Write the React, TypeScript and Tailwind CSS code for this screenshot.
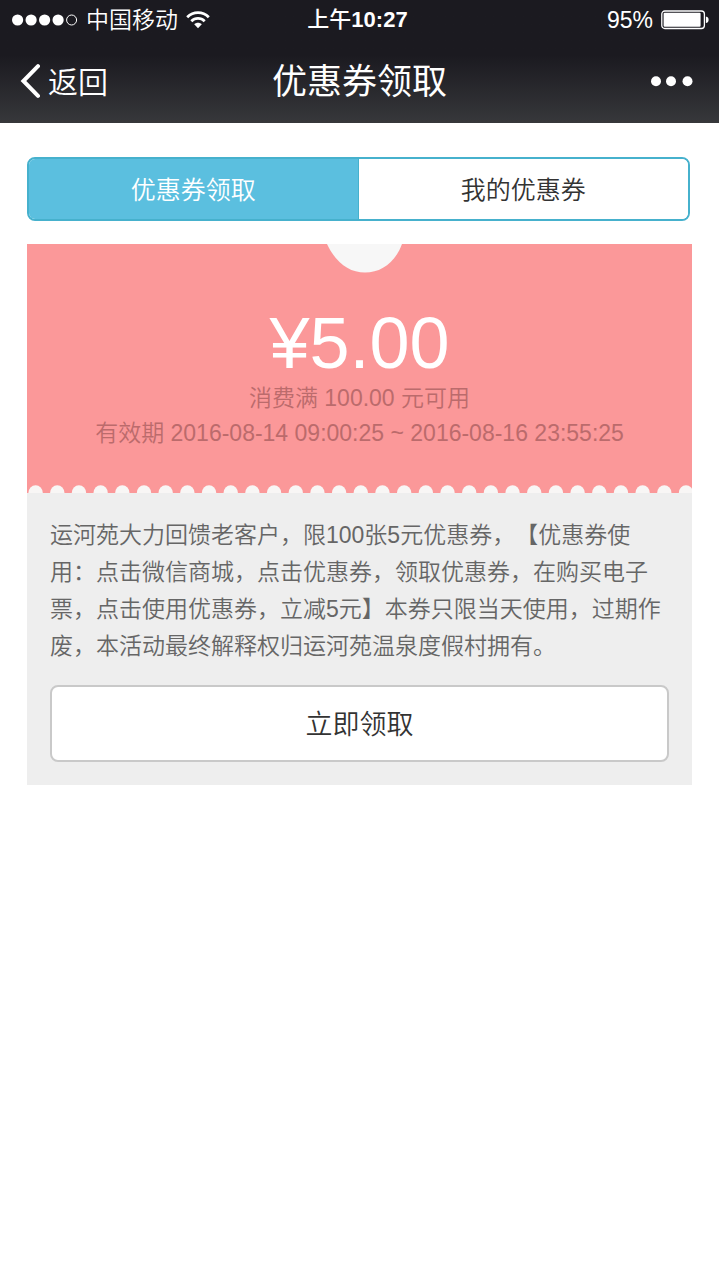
const SIGNAL = [true, true, true, true, false];

function StatusBar() {
  return (
    <div className="grid h-10 grid-cols-[1fr_auto_1fr] items-center px-[10px] text-[23px] leading-10">
      <div className="flex items-center gap-2 pl-[2px]">
        <svg className="h-3 w-[66px]" viewBox="0 0 66 12" role="img" aria-label="信号">
          {SIGNAL.map((on, i) => (
            <circle
              key={i}
              cx={5.6 + i * 13.5}
              cy="6"
              r={on ? 5.6 : 5}
              fill={on ? 'white' : 'none'}
              stroke={on ? 'none' : 'white'}
            />
          ))}
        </svg>
        <span className="font-[350]">中国移动</span>
        <svg className="h-[18px] w-6" viewBox="0 0 24 18" fill="none" stroke="white" strokeWidth="2.8" aria-hidden="true">
          <path d="M1.2 6.2C7.4.1 16.6.1 22.8 6.2" />
          <path d="M5.3 10.3C9.2 6.5 14.8 6.5 18.7 10.3" />
          <path d="M12 17.2L8.2 13.3C10.4 11.3 13.6 11.3 15.8 13.3Z" fill="white" stroke="none" />
        </svg>
      </div>
      <span className="pr-1 text-[22px] font-medium">
        上午<b className="font-bold">10:27</b>
      </span>
      <div className="flex items-center justify-end gap-2">
        <span>95%</span>
        <svg className="h-5 w-12" viewBox="0 0 48 20" aria-hidden="true">
          <rect x="0.8" y="1" width="42.6" height="17.5" rx="3" fill="none" stroke="white" strokeWidth="1.3" />
          <rect x="2.6" y="2.8" width="37" height="14" rx="1" fill="white" />
          <path d="M44.9 6.5Q47.6 7 47.6 9.8Q47.6 12.6 44.9 13.1Z" fill="white" />
        </svg>
      </div>
    </div>
  );
}

function NavBar() {
  return (
    <div className="grid h-[83px] grid-cols-[1fr_auto_1fr] items-center px-5">
      <button type="button" className="flex items-center gap-2 text-[30px] font-[350]">
        <svg className="h-9 w-5" viewBox="0 0 20 36" fill="none" stroke="white" strokeWidth="4" strokeLinecap="round" strokeLinejoin="miter" aria-hidden="true">
          <path d="M18 2.2L3.4 17L18 31.8" />
        </svg>
        <span className="pt-[2px]">返回</span>
      </button>
      <h1 className="pt-[2px] text-[35px]">优惠券领取</h1>
      <button type="button" aria-label="更多" className="justify-self-end pr-[6px]">
        <svg className="h-3 w-11" viewBox="0 0 44 12" fill="white" aria-hidden="true">
          <circle cx="7" cy="5.2" r="5" />
          <circle cx="22" cy="5.2" r="5" />
          <circle cx="38.5" cy="5.2" r="5" />
        </svg>
      </button>
    </div>
  );
}

function Coupon() {
  return (
    <article className="bg-[#eeeeee]">
      <div className="flex flex-col items-center bg-[#fb9899] text-[23px] text-[#bb6b6c]">
        <svg className="h-[29px] w-20 translate-x-1" viewBox="0 0 80 29" aria-hidden="true">
          <path d="M3 0C12 19 25 28.5 41 28.5S71 19 78 0Z" fill="#f7f7f7" />
        </svg>
        <p className="mt-8 text-[72px] leading-[76px] text-white">¥5.00</p>
        <p className="leading-[35px] font-[350]">消费满 100.00 元可用</p>
        <p className="leading-[35px] font-[350]">有效期 2016-08-14 09:00:25 ~ 2016-08-16 23:55:25</p>
        <svg className="mt-[34px] w-full" viewBox="0 0 665 8" fill="#f8f6f5" aria-hidden="true">
          {Array.from({ length: 31 }, (_, i) => (
            <ellipse key={i} cx={8.6 + i * 21.68} cy="8" rx="7.2" ry="7.8" />
          ))}
        </svg>
      </div>
      <div className="px-[23px] pt-6 pb-[23px]">
        <p className="text-[23px] leading-[37px] font-[350] text-[#666666] [text-spacing-trim:space-all]">
          运河苑大力回馈老客户，限100张5元优惠券，【优惠券使用：点击微信商城，点击优惠券，领取优惠券，在购买电子票，点击使用优惠券，立减5元】本券只限当天使用，过期作废，本活动最终解释权归运河苑温泉度假村拥有。
        </p>
        <button
          type="button"
          className="mt-5 h-[77px] w-full rounded-lg border-2 border-[#c9c9c9] bg-white pt-1 text-[27px] font-[350] text-[#333333]"
        >
          立即领取
        </button>
      </div>
    </article>
  );
}

export default function App() {
  return (
    <div className="min-h-screen bg-white font-['Liberation_Sans','Noto_Sans_CJK_SC',sans-serif]" lang="zh-CN">
      <header className="bg-linear-to-b from-[#1b1a20] from-45% to-[#37383b] text-white">
        <StatusBar />
        <NavBar />
      </header>
      <main className="px-[27px] pt-[34px]">
        <nav className="mr-[2px] mb-[23px] grid h-16 grid-cols-2 overflow-hidden rounded-lg border-2 border-[#46b1cd] text-[25px]">
          <button type="button" aria-pressed="true" className="border-r border-[#46b1cd] bg-[#5bbfdf] pt-1 font-[350] text-white">
            优惠券领取
          </button>
          <button type="button" aria-pressed="false" className="bg-white pt-1 font-[350] text-[#333333]">
            我的优惠券
          </button>
        </nav>
        <Coupon />
      </main>
    </div>
  );
}
